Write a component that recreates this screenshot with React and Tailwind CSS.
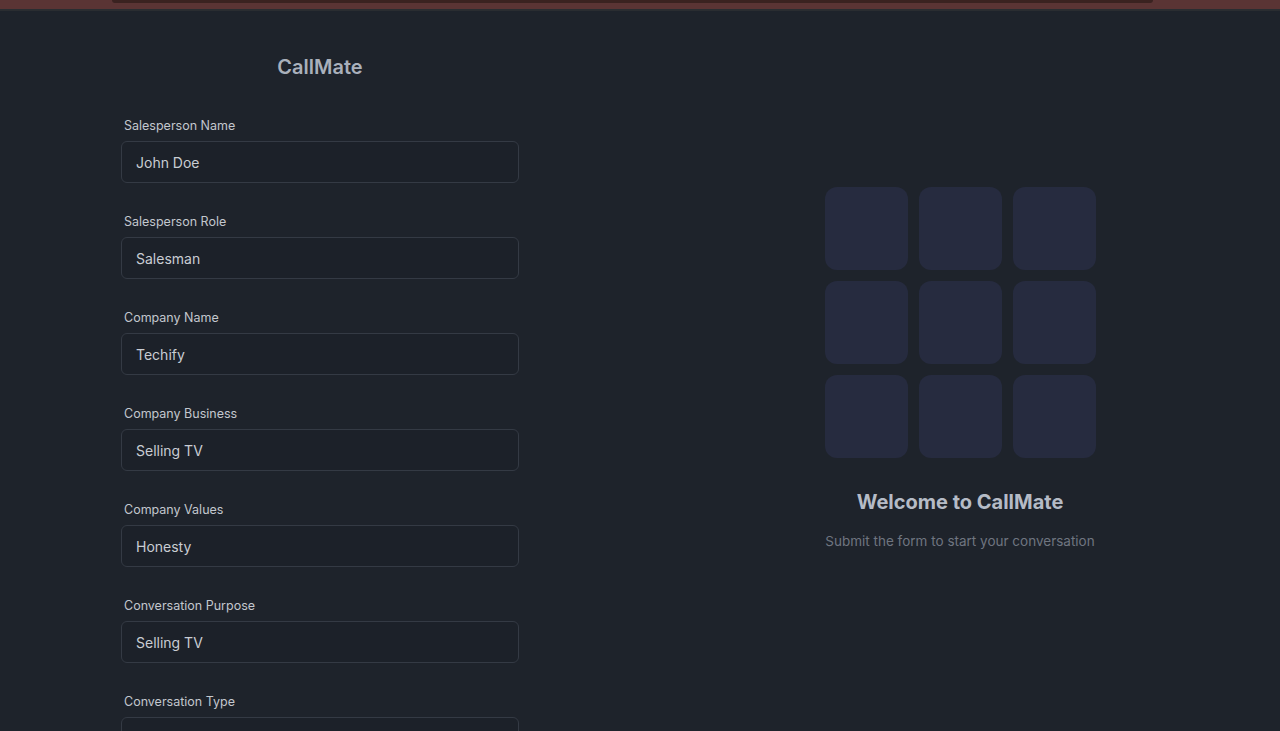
import React from 'react';

const fields = [
  { label: 'Salesperson Name', value: 'John Doe' },
  { label: 'Salesperson Role', value: 'Salesman' },
  { label: 'Company Name', value: 'Techify' },
  { label: 'Company Business', value: 'Selling TV' },
  { label: 'Company Values', value: 'Honesty' },
  { label: 'Conversation Purpose', value: 'Selling TV' },
  { label: 'Conversation Type', value: '' },
];

const App = () => {
  return (
    <div className="h-[731px] overflow-hidden bg-[#1e232b] flex flex-col font-['Inter',sans-serif]">
      {/* top strip */}
      <div className="h-[9px] bg-[#5a3434] flex shrink-0">
        <div className="ml-[112px] w-[1041px] h-[3px] bg-[#3a2220] rounded-b-md" />
      </div>
      <div className="h-[2px] bg-[#2a2d31] shrink-0" />

      <div className="flex flex-1 min-h-0">
        {/* form column */}
        <div className="w-1/2 flex flex-col items-center">
          <h1 className="mt-[44px] text-[20px] font-semibold text-[#a9b0bb] leading-[24px]">CallMate</h1>
          <form className="w-[398px] mt-[39px] flex flex-col gap-[31px]">
            {fields.map((f) => (
              <div key={f.label} className="flex flex-col">
                <label className="pl-[3px] text-[12.5px] text-[#c3c7ce] leading-[16px] mb-[7px]">
                  {f.label}
                </label>
                <input
                  readOnly
                  value={f.value}
                  className="h-[42px] rounded-md border border-[#343a44] bg-[#1c2129] px-[14px] text-[14px] text-[#c9cdd3] outline-none"
                />
              </div>
            ))}
          </form>
        </div>

        {/* welcome column */}
        <div className="w-1/2 flex flex-col items-center justify-center pb-[4px]">
          <div className="grid grid-cols-3 gap-[11px]">
            {Array.from({ length: 9 }).map((_, i) => (
              <div key={i} className="w-[83px] h-[83px] rounded-xl bg-[#262b3f]" />
            ))}
          </div>
          <h2 className="mt-[32px] text-[20px] font-bold text-[#b5bbc6] leading-[24px]">Welcome to CallMate</h2>
          <p className="mt-[17px] text-[13.5px] text-[#6f7580] leading-[20px]">Submit the form to start your conversation</p>
        </div>
      </div>
    </div>
  );
};

export default App;
